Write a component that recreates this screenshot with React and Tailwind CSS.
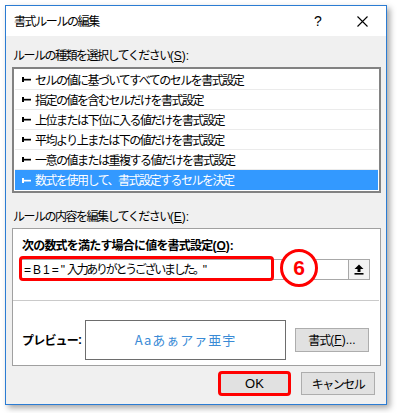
import React from "react";

const items = [
  "セルの値に基づいてすべてのセルを書式設定",
  "指定の値を含むセルだけを書式設定",
  "上位または下位に入る値だけを書式設定",
  "平均より上または下の値だけを書式設定",
  "一意の値または重複する値だけを書式設定",
  "数式を使用して、書式設定するセルを決定",
];

function Marker({ color }) {
  return (
    <svg width="9" height="7" viewBox="0 0 9 7" className="shrink-0">
      <rect x="0" y="1" width="2" height="5" fill={color} />
      <rect x="0" y="2.8" width="9" height="1.7" fill={color} />
    </svg>
  );
}

export default function App() {
  const font = { fontFamily: '"Noto Sans CJK JP", "Noto Sans", sans-serif' };
  const latin = { fontFamily: '"Liberation Sans", "Noto Sans CJK JP", sans-serif' };
  return (
    <div className="w-[397px] h-[413px] bg-white pt-[5px] pl-[5px]" style={font}>
      <div className="w-[382px] h-[400px] border border-[#2b7cd3] flex flex-col shadow-[3px_3px_6px_rgba(0,0,0,0.35)]">
        {/* title bar */}
        <div className="h-[30px] bg-white flex items-center pl-[8px] text-[12px] tracking-[-1.4px] text-black">
          <span>書式ルールの編集</span>
          <span className="ml-auto w-[12px] text-center text-[14px] tracking-normal" style={latin}>?</span>
          <svg width="11" height="11" viewBox="0 0 11 11" className="ml-[33px] mr-[18px]">
            <path d="M0.5 0.5 L10.5 10.5 M10.5 0.5 L0.5 10.5" stroke="#000" strokeWidth="1.1" />
          </svg>
        </div>
        {/* body */}
        <div className="flex-1 bg-[#f0f0f0] pl-[6px] pr-[5px] flex flex-col text-[12px] text-black">
          <div className="mt-[11px] h-[16px] leading-[16px] pl-[1px] tracking-[-1.5px]">
            ルールの種類を選択してください
            <span className="tracking-normal" style={latin}>(<span className="underline">S</span>):</span>
          </div>
          <div className="mt-[4px] h-[126px] border-2 border-[#828282] bg-white p-[1px] flex flex-col">
            {items.map((t, i) => {
              const sel = i === items.length - 1;
              return (
                <div
                  key={i}
                  className={
                    sel
                      ? "h-[20px] flex items-center pl-[7px] gap-[4px] bg-[#3399ff] text-white"
                      : "h-[20px] flex items-center pl-[7px] gap-[4px] border-b border-[#ebebeb]"
                  }
                >
                  <Marker color={sel ? "#ffffff" : "#000000"} />
                  <span className="tracking-[-1.5px] leading-[20px]">{t}</span>
                </div>
              );
            })}
          </div>
          <div className="mt-[15px] h-[16px] leading-[16px] pl-[1px] tracking-[-1.5px]">
            ルールの内容を編集してください
            <span className="tracking-normal" style={latin}>(<span className="underline">E</span>):</span>
          </div>
          <div className="relative mt-[4px] h-[138px] border border-[#a0a0a0] bg-white flex flex-col">
            <div className="mt-[8px] ml-[9px] h-[16px] leading-[16px] font-bold tracking-[-0.8px]">
              次の数式を満たす場合に値を書式設定
              <span className="tracking-normal" style={latin}>(<span className="underline">O</span>):</span>
            </div>
            <div className="mt-[6px] ml-[7px] w-[350px] h-[21px] border border-[#a8a8a8] flex items-center">
              <span className="pl-[3px] leading-[19px] whitespace-pre">
                <span className="tracking-[2px]" style={latin}>=B1="</span>
                <span className="tracking-[-2.3px]">入力ありがとうございました。</span>
                <span style={latin}>"</span>
              </span>
              <div className="ml-auto w-[21px] h-full border-l border-[#a8a8a8] bg-[#f3f3f3] flex items-center justify-center">
                <svg width="10" height="11" viewBox="0 0 10 11">
                  <path d="M5 0.5 L9.5 5 L6.5 5 L6.5 8 L3.5 8 L3.5 5 L0.5 5 Z" fill="#000" />
                  <rect x="0.5" y="9" width="9" height="1.6" fill="#000" />
                </svg>
              </div>
            </div>
            <div className="mt-[20px] mr-[1px] h-[1px] bg-[#cacaca]" />
            <div className="mt-[19px] flex items-start">
              <div className="ml-[9px] w-[63px] h-[40px] flex items-center font-bold tracking-[-0.8px]">
                プレビュー<span className="tracking-normal" style={latin}>:</span>
              </div>
              <div className="w-[201px] h-[40px] border border-[#6d6d6d] bg-white flex items-center justify-center text-[13px] text-[#3a8bd6] tracking-[1px]">
                Aaあぁアァ亜宇
              </div>
              <div className="ml-[9px] mt-[8px] w-[74px] h-[24px] border border-[#adadad] bg-[#e1e1e1] flex items-center justify-center">
                <span className="tracking-[-1px]">書式</span>
                <span style={latin}>(<span className="underline">F</span>)...</span>
              </div>
            </div>
            {/* annotations */}
            <div className="absolute left-[6px] top-[27px] w-[255px] h-[25px] border-[3px] border-[#ff0000] rounded-[4px]" />
            <div className="absolute left-[267px] top-[20px] w-[38px] h-[38px] rounded-full border-[3px] border-[#ff0000] bg-white flex items-center justify-center text-[21px] font-bold text-[#ff0000]" style={latin}>
              6
            </div>
          </div>
          <div className="mt-[5px] flex justify-end pr-[6px]">
            <div className="w-[73px] h-[25px] border-[3px] border-[#ff0000] rounded-[4px] bg-[#e1e1e1] flex items-center justify-center text-[13px]" style={latin}>
              OK
            </div>
            <div className="ml-[10px] mt-[1px] w-[74px] h-[23px] border border-[#adadad] bg-[#e1e1e1] flex items-center justify-center tracking-[-1.5px]">
              キャンセル
            </div>
          </div>
        </div>
      </div>
    </div>
  );
}
